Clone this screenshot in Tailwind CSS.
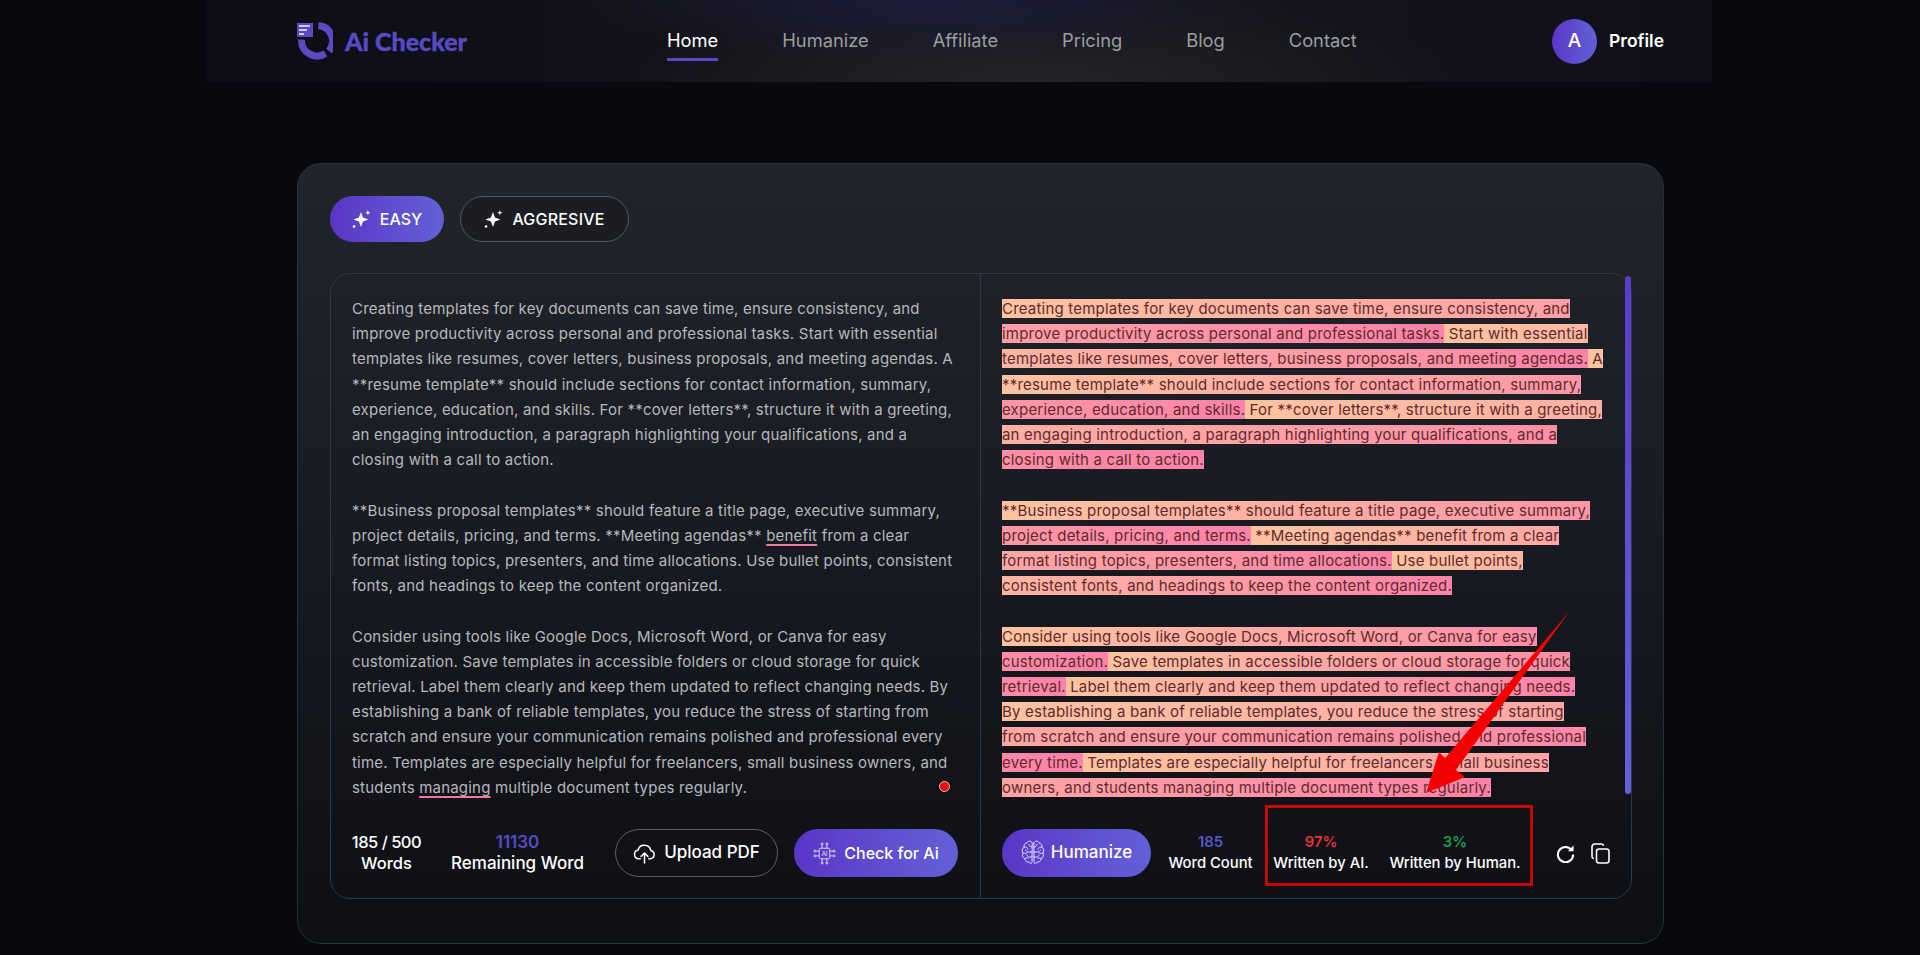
<!DOCTYPE html>
<html lang="en">
<head>
<meta charset="utf-8">
<title>Ai Checker</title>
<script src="https://cdn.jsdelivr.net/npm/@tailwindcss/browser@4"></script>
</head>
<body class="bg-[#08090e] font-['Inter',sans-serif] text-white min-h-[955px] overflow-hidden relative">

<!-- Header -->
<header class="ml-[206px] w-[1506px] h-[82px] pl-[91px] pr-[48px] flex items-center bg-[radial-gradient(ellipse_360px_60px_at_48%_0%,#1d1b3a_0%,transparent_100%),radial-gradient(ellipse_420px_90px_at_55%_100%,#232427_0%,transparent_100%),linear-gradient(to_right,#0c0d15,#14151b_45%,#14151b_70%,#0e0f18)]">
    <a class="flex items-center w-[370px]">
        <svg class="w-[36px] h-[40px] shrink-0" viewBox="0 0 36 40" fill="none">
            <path d="M21.4 4.6 A15.5 15.5 0 0 1 32 29.9" stroke="#5a49c0" stroke-width="7"/>
            <path d="M28.5 32.5 A15.5 15.5 0 0 1 4.6 18.6" stroke="#5a49c0" stroke-width="7"/>
            <rect x="0" y="2" width="16" height="14" fill="#5a49c0"/>
            <rect x="2" y="4" width="11" height="2" fill="#cfcaf5"/>
            <rect x="2" y="8" width="8" height="2" fill="#cfcaf5"/>
            <rect x="2" y="12" width="5" height="2" fill="#cfcaf5"/>
        </svg>
        <span class="ml-[12px] font-['Lato',sans-serif] font-black text-[25px] leading-none text-[#5a49c0] [-webkit-text-stroke:0.4px_#5a49c0]">Ai Checker</span>
    </a>
    <nav class="flex items-center gap-[64px] text-[18.3px] text-[#9c9da1]">
        <a class="relative text-white">Home<span class="absolute left-0 right-0 top-[31px] h-[3px] bg-[#5a49c0]"></span></a>
        <a>Humanize</a>
        <a>Affiliate</a>
        <a>Pricing</a>
        <a>Blog</a>
        <a>Contact</a>
    </nav>
    <a class="ml-auto flex items-center gap-[12px]">
        <span class="w-[45px] h-[45px] rounded-full bg-gradient-to-r from-[#5b35c6] to-[#6360d6] flex items-center justify-center text-[19px] font-medium">A</span>
        <span class="text-[17.5px] font-semibold">Profile</span>
    </a>
</header>

<!-- Main card -->
<main class="ml-[297px] mt-[81px] w-[1367px] h-[781px] rounded-[24px] border border-[#2c2f36] bg-gradient-to-b from-[#21252b] via-[#181a21] to-[#0d0f14] px-[32px] pt-[32px]">

    <!-- Mode tabs -->
    <div class="flex gap-[16px] h-[46px]">
        <button class="w-[114px] rounded-full bg-gradient-to-r from-[#5b35c6] to-[#6360d6] flex items-center justify-center gap-[8px] text-[16px] font-medium">
            <svg class="w-[20px] h-[18px]" viewBox="0 0 18 17" fill="#fff"><path d="M8 2 9.900 7.100 15 9 9.900 10.900 8 16 6.100 10.900 1 9 6.100 7.100Z"/><path d="M14.500 0 15.200 1.800 17 2.500 15.200 3.200 14.500 5 13.800 3.200 12 2.500 13.800 1.800Z"/><circle cx="1.500" cy="15.500" r="1.200"/></svg>
            EASY
        </button>
        <button class="w-[169px] rounded-full border border-[#53565d] bg-[#1b1d23] flex items-center justify-center gap-[8px] text-[16px] font-medium tracking-[0.2px]">
            <svg class="w-[20px] h-[18px]" viewBox="0 0 18 17" fill="#fff"><path d="M8 2 9.900 7.100 15 9 9.900 10.900 8 16 6.100 10.900 1 9 6.100 7.100Z"/><path d="M14.500 0 15.200 1.800 17 2.500 15.200 3.200 14.500 5 13.800 3.200 12 2.500 13.800 1.800Z"/><circle cx="1.500" cy="15.500" r="1.200"/></svg>
            AGGRESIVE
        </button>
    </div>

    <!-- Editor box -->
    <div class="mt-[31px] w-[1302px] h-[626px] rounded-[20px] border border-[#30354a] flex">

        <!-- Left pane -->
        <section class="relative w-[650px] h-full border-r border-[#30354a] flex flex-col px-[21px] pt-[22px] pb-[21px]">
            <p class="text-[15px] tracking-[0.2px] leading-[25.2px] text-[#b7b8bc] whitespace-nowrap">
                Creating templates for key documents can save time, ensure consistency, and<br>
                improve productivity across personal and professional tasks. Start with essential<br>
                templates like resumes, cover letters, business proposals, and meeting agendas. A<br>
                **resume template** should include sections for contact information, summary,<br>
                experience, education, and skills. For **cover letters**, structure it with a greeting,<br>
                an engaging introduction, a paragraph highlighting your qualifications, and a<br>
                closing with a call to action.<br><br>
                **Business proposal templates** should feature a title page, executive summary,<br>
                project details, pricing, and terms. **Meeting agendas** <span class="underline decoration-[#f07a9a] decoration-2 underline-offset-3">benefit</span> from a clear<br>
                format listing topics, presenters, and time allocations. Use bullet points, consistent<br>
                fonts, and headings to keep the content organized.<br><br>
                Consider using tools like Google Docs, Microsoft Word, or Canva for easy<br>
                customization. Save templates in accessible folders or cloud storage for quick<br>
                retrieval. Label them clearly and keep them updated to reflect changing needs. By<br>
                establishing a bank of reliable templates, you reduce the stress of starting from<br>
                scratch and ensure your communication remains polished and professional every<br>
                time. Templates are especially helpful for freelancers, small business owners, and<br>
                students <span class="underline decoration-[#f07a9a] decoration-2 underline-offset-3">managing</span> multiple document types regularly.
            </p>
            <span class="absolute left-[608px] top-[507px] w-[11px] h-[11px] rounded-full bg-[#e60f0f] border border-[#f3b9b9]"></span>

            <div class="mt-auto flex items-center h-[48px]">
                <div class="w-[69px] flex flex-col items-center text-[16.5px] leading-[21px] font-medium whitespace-nowrap"><span class="tracking-[-0.5px]">185 / 500</span><span>Words</span></div>
                <div class="ml-[28px] w-[137px] flex flex-col items-center text-[17px] leading-[21px] font-medium whitespace-nowrap"><span class="text-[#5a49c8] font-semibold">11130</span><span>Remaining Word</span></div>
                <button class="ml-[29px] w-[163px] h-[48px] rounded-full border border-[#5c5e64] flex items-center justify-center gap-[8px] text-[17px] font-medium">
                    <svg class="w-[23px] h-[23px]" viewBox="0 0 24 24" fill="none" stroke="#fff" stroke-width="1.6" stroke-linecap="round" stroke-linejoin="round"><path d="M7.5 17.5H6a4.6 4.6 0 0 1-.7-9.1 6.8 6.8 0 0 1 13.2.4A4.4 4.4 0 0 1 18 17.5h-1.5"/><path d="M12 22V11.5M8.5 15l3.5-3.5 3.5 3.5"/></svg>
                    Upload PDF
                </button>
                <button class="ml-[16px] w-[164px] h-[48px] rounded-full bg-gradient-to-r from-[#5b35c6] to-[#6360d6] flex items-center justify-center gap-[8px] text-[16px] font-medium">
                    <svg class="w-[23px] h-[23px]" viewBox="0 0 24 24" fill="none" stroke="#d9d5fa" stroke-width="1"><rect x="6.500" y="6.500" width="11" height="11" rx="1.500"/><text x="12" y="14.200" text-anchor="middle" font-size="6" font-family="Inter" fill="#d9d5fa" stroke="none">AI</text><path d="M9.500 6.500V3M14.500 6.500V3M9.500 17.500V21M14.500 17.500V21M6.500 9.500H3M6.500 14.500H3M17.500 9.500H21M17.500 14.500H21"/><circle cx="9.500" cy="2" r="1"/><circle cx="14.500" cy="2" r="1"/><circle cx="9.500" cy="22" r="1"/><circle cx="14.500" cy="22" r="1"/><circle cx="2" cy="9.500" r="1"/><circle cx="2" cy="14.500" r="1"/><circle cx="22" cy="9.500" r="1"/><circle cx="22" cy="14.500" r="1"/></svg>
                    Check for Ai
                </button>
            </div>
        </section>

        <!-- Right pane -->
        <section class="relative flex-1 h-full flex flex-col pl-[21px] pt-[22px] pb-[21px]">
            <p class="text-[15px] tracking-[0.2px] leading-[25.2px] text-[#5e2a2c] whitespace-nowrap">
                <span class="bg-gradient-to-r from-[#ffc3a0] to-[#ff82a8]">Creating templates for key documents can save time, ensure consistency, and<br>
                improve productivity across personal and professional tasks.</span><span class="bg-gradient-to-r from-[#ffc3a0] to-[#ff82a8]"> Start with essential<br>
                templates like resumes, cover letters, business proposals, and meeting agendas.</span><span class="bg-gradient-to-r from-[#ffc3a0] to-[#ff82a8]"> A<br>
                **resume template** should include sections for contact information, summary,<br>
                experience, education, and skills.</span><span class="bg-gradient-to-r from-[#ffc3a0] to-[#ff82a8]"> For **cover letters**, structure it with a greeting,<br>
                an engaging introduction, a paragraph highlighting your qualifications, and a<br>
                closing with a call to action.</span><br><br>
                <span class="bg-gradient-to-r from-[#ffc3a0] to-[#ff82a8]">**Business proposal templates** should feature a title page, executive summary,<br>
                project details, pricing, and terms.</span><span class="bg-gradient-to-r from-[#ffc3a0] to-[#ff82a8]"> **Meeting agendas** benefit from a clear<br>
                format listing topics, presenters, and time allocations.</span><span class="bg-gradient-to-r from-[#ffc3a0] to-[#ff82a8]"> Use bullet points,<br>
                consistent fonts, and headings to keep the content organized.</span><br><br>
                <span class="bg-gradient-to-r from-[#ffc3a0] to-[#ff82a8]">Consider using tools like Google Docs, Microsoft Word, or Canva for easy<br>
                customization.</span><span class="bg-gradient-to-r from-[#ffc3a0] to-[#ff82a8]"> Save templates in accessible folders or cloud storage for quick<br>
                retrieval.</span><span class="bg-gradient-to-r from-[#ffc3a0] to-[#ff82a8]"> Label them clearly and keep them updated to reflect changing needs.</span><br>
                <span class="bg-gradient-to-r from-[#ffc3a0] to-[#ff82a8]">By establishing a bank of reliable templates, you reduce the stress of starting<br>
                from scratch and ensure your communication remains polished and professional<br>
                every time.</span><span class="bg-gradient-to-r from-[#ffc3a0] to-[#ff82a8]"> Templates are especially helpful for freelancers, small business<br>
                owners, and students managing multiple document types regularly.</span>
            </p>
            <span class="absolute right-0 top-[2px] w-[6px] h-[518px] rounded-full bg-gradient-to-b from-[#5b3bc8] to-[#6360d6]"></span>

            <div class="mt-auto flex items-center h-[48px]">
                <button class="w-[149px] h-[48px] rounded-full bg-gradient-to-r from-[#5b35c6] to-[#6360d6] flex items-center justify-center gap-[6px] text-[17px] font-medium">
                    <svg class="w-[24px] h-[28px]" viewBox="0 0 24 28" fill="none" stroke="#e4e0fb" stroke-width="1" stroke-linecap="round" stroke-linejoin="round">
                        <path d="M11 3.500C10 1.500 6.800 1.600 6 4 3.600 4 2.400 6.400 3.200 8.200 1 9.400.6 12.400 2.200 14 .8 16.200 1.800 19 4 19.600c-.2 2.400 2.200 4.200 4 3.200.6 2.400 3 2.600 3 .2Z"/>
                        <path d="M13 3.500C14 1.500 17.200 1.600 18 4c2.400 0 3.600 2.400 2.800 4.200 2.200 1.200 2.600 4.200 1 5.800 1.400 2.200.4 5-1.800 5.600.2 2.400-2.200 4.200-4 3.200-.6 2.400-3 2.600-3 .2Z"/>
                        <path d="M11 8C9 8 8 6.800 8 5.500M3.200 8.200C5 7.600 6.500 8.400 7 10M11 13H7.500C6 13 5 12 4.500 11M2.200 14c1.400.8 3 .6 4-.4M11 18H8c-1 0-1.800-.8-2-2M4 19.600c1-.6 2-.8 3-.4"/>
                        <path d="M13 8c2 0 3-1.200 3-2.500M20.800 8.200C19 7.600 17.500 8.400 17 10M13 13h3.500c1.500 0 2.500-1 3-2M21.800 14c-1.400.8-3 .6-4-.4M13 18h3c1 0 1.800-.8 2-2M20 19.600c-1-.6-2-.8-3-.4"/>
                    </svg>
                    Humanize
                </button>
                <div class="ml-[18px] w-[83px] flex flex-col items-center text-[14.8px] leading-[21px] font-medium whitespace-nowrap"><span class="font-semibold text-[#5a52c8]">185</span><span>Word Count</span></div>
                <div class="ml-[22px] w-[94px] flex flex-col items-center text-[14.8px] leading-[21px] font-medium whitespace-nowrap"><span class="font-semibold text-[#e0353a]">97%</span><span>Written by AI.</span></div>
                <div class="ml-[21px] w-[132px] flex flex-col items-center text-[14.8px] leading-[21px] font-medium whitespace-nowrap"><span class="font-semibold text-[#12a150]">3%</span><span>Written by Human.</span></div>
                <svg class="ml-[35px] w-[19px] h-[19px]" viewBox="0 0 20 20" fill="none" stroke="#fff" stroke-width="2.200"><path d="M16.500 6.500A8 8 0 1 0 18 11"/><path d="M18.500 1.500v6h-6" fill="#fff" stroke="none"/></svg>
                <svg class="ml-[16px] w-[19px] h-[21px]" viewBox="0 0 19 21" fill="none" stroke="#fff" stroke-width="1.600"><rect x="5.500" y="6" width="12.500" height="14" rx="2.500"/><path d="M2.800 15.500A2 2 0 0 1 1 13.500V4a3 3 0 0 1 3-3h6.500a2 2 0 0 1 2 1.800"/></svg>
            </div>

            <!-- Annotation box -->
            <div class="absolute left-[284px] top-[531px] w-[268px] h-[81px] border-[3px] border-[#c80404]"></div>
        </section>
    </div>
</main>

<!-- Annotation arrow -->
<svg class="absolute left-0 top-0 w-[1920px] h-[955px] pointer-events-none" viewBox="0 0 1920 955">
    <path d="M1569 612 1456 770 1465 777 1426 793 1439 752 1445 758Z" fill="#f50000"/>
</svg>
</body>
</html>
